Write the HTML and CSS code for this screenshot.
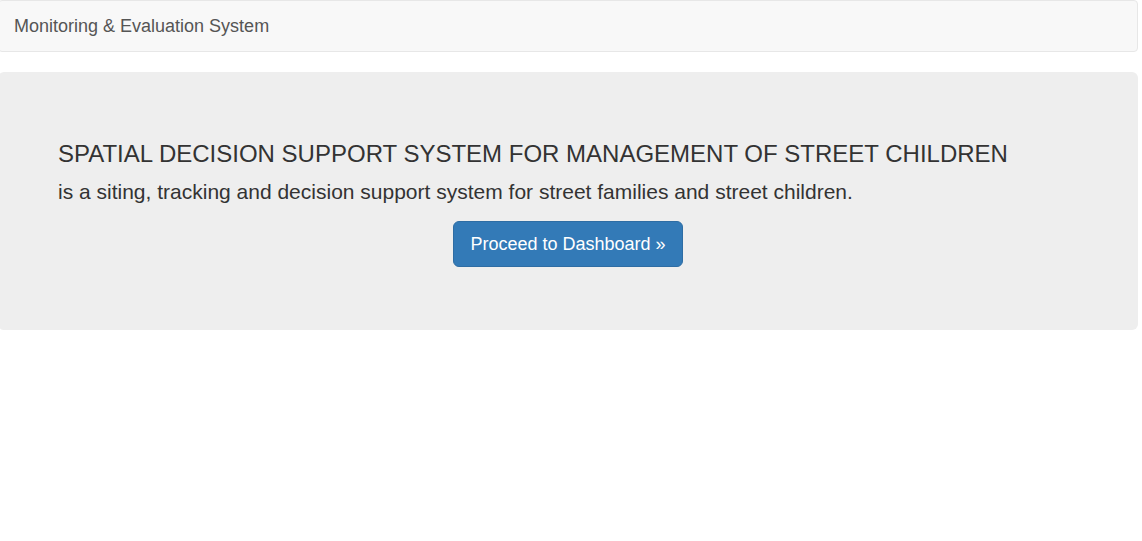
FILE: index.html
```html
<!DOCTYPE html>
<html>
<head>
<meta charset="utf-8">
<title>Monitoring &amp; Evaluation System</title>
<link rel="stylesheet" href="styles.css">
</head>
<body>
<div class="page">
  <nav class="navbar">
    <a class="brand" href="#">Monitoring &amp; Evaluation System</a>
  </nav>
  <section class="jumbotron">
    <h3 class="title">SPATIAL DECISION SUPPORT SYSTEM FOR MANAGEMENT OF STREET CHILDREN</h3>
    <p class="lead">is a siting, tracking and decision support system for street families and street children.</p>
    <div class="actions">
      <a class="btn" href="#">Proceed to Dashboard &raquo;</a>
    </div>
  </section>
</div>
</body>
</html>
```

FILE: styles.css
```css
* { box-sizing: border-box; }
html, body {
  margin: 0;
  padding: 0;
  background: #fff;
  font-family: "Liberation Sans", Arial, Helvetica, sans-serif;
  font-size: 14px;
  line-height: 1.42857;
  color: #333;
  overflow: hidden;
}
.page {
  width: 1140px;
  margin-left: -2px;
}
.navbar {
  height: 52px;
  background: #f8f8f8;
  border: 1px solid #e7e7e7;
  border-radius: 4px;
  margin-bottom: 20px;
  display: flex;
  align-items: flex-start;
}
.brand {
  display: block;
  padding: 15px;
  font-size: 18px;
  line-height: 20px;
  height: 50px;
  color: #555;
  text-decoration: none;
}
.jumbotron {
  background: #eee;
  border-radius: 6px;
  padding: 48px 60px;
}
.title {
  margin: 21px 0 10px;
  font-size: 24px;
  line-height: 26.4px;
  font-weight: 400;
  color: #333;
}
.lead {
  margin: 0 0 14px;
  font-size: 21px;
  line-height: 30px;
  font-weight: 400;
  color: #333;
}
.actions {
  text-align: center;
  margin-bottom: 15px;
  height: 46px;
}
.btn {
  display: inline-block;
  padding: 10px 16px;
  font-size: 18px;
  line-height: 24px;
  color: #fff;
  background: #337ab7;
  border: 1px solid #2e6da4;
  border-radius: 6px;
  text-decoration: none;
  vertical-align: top;
}
```
